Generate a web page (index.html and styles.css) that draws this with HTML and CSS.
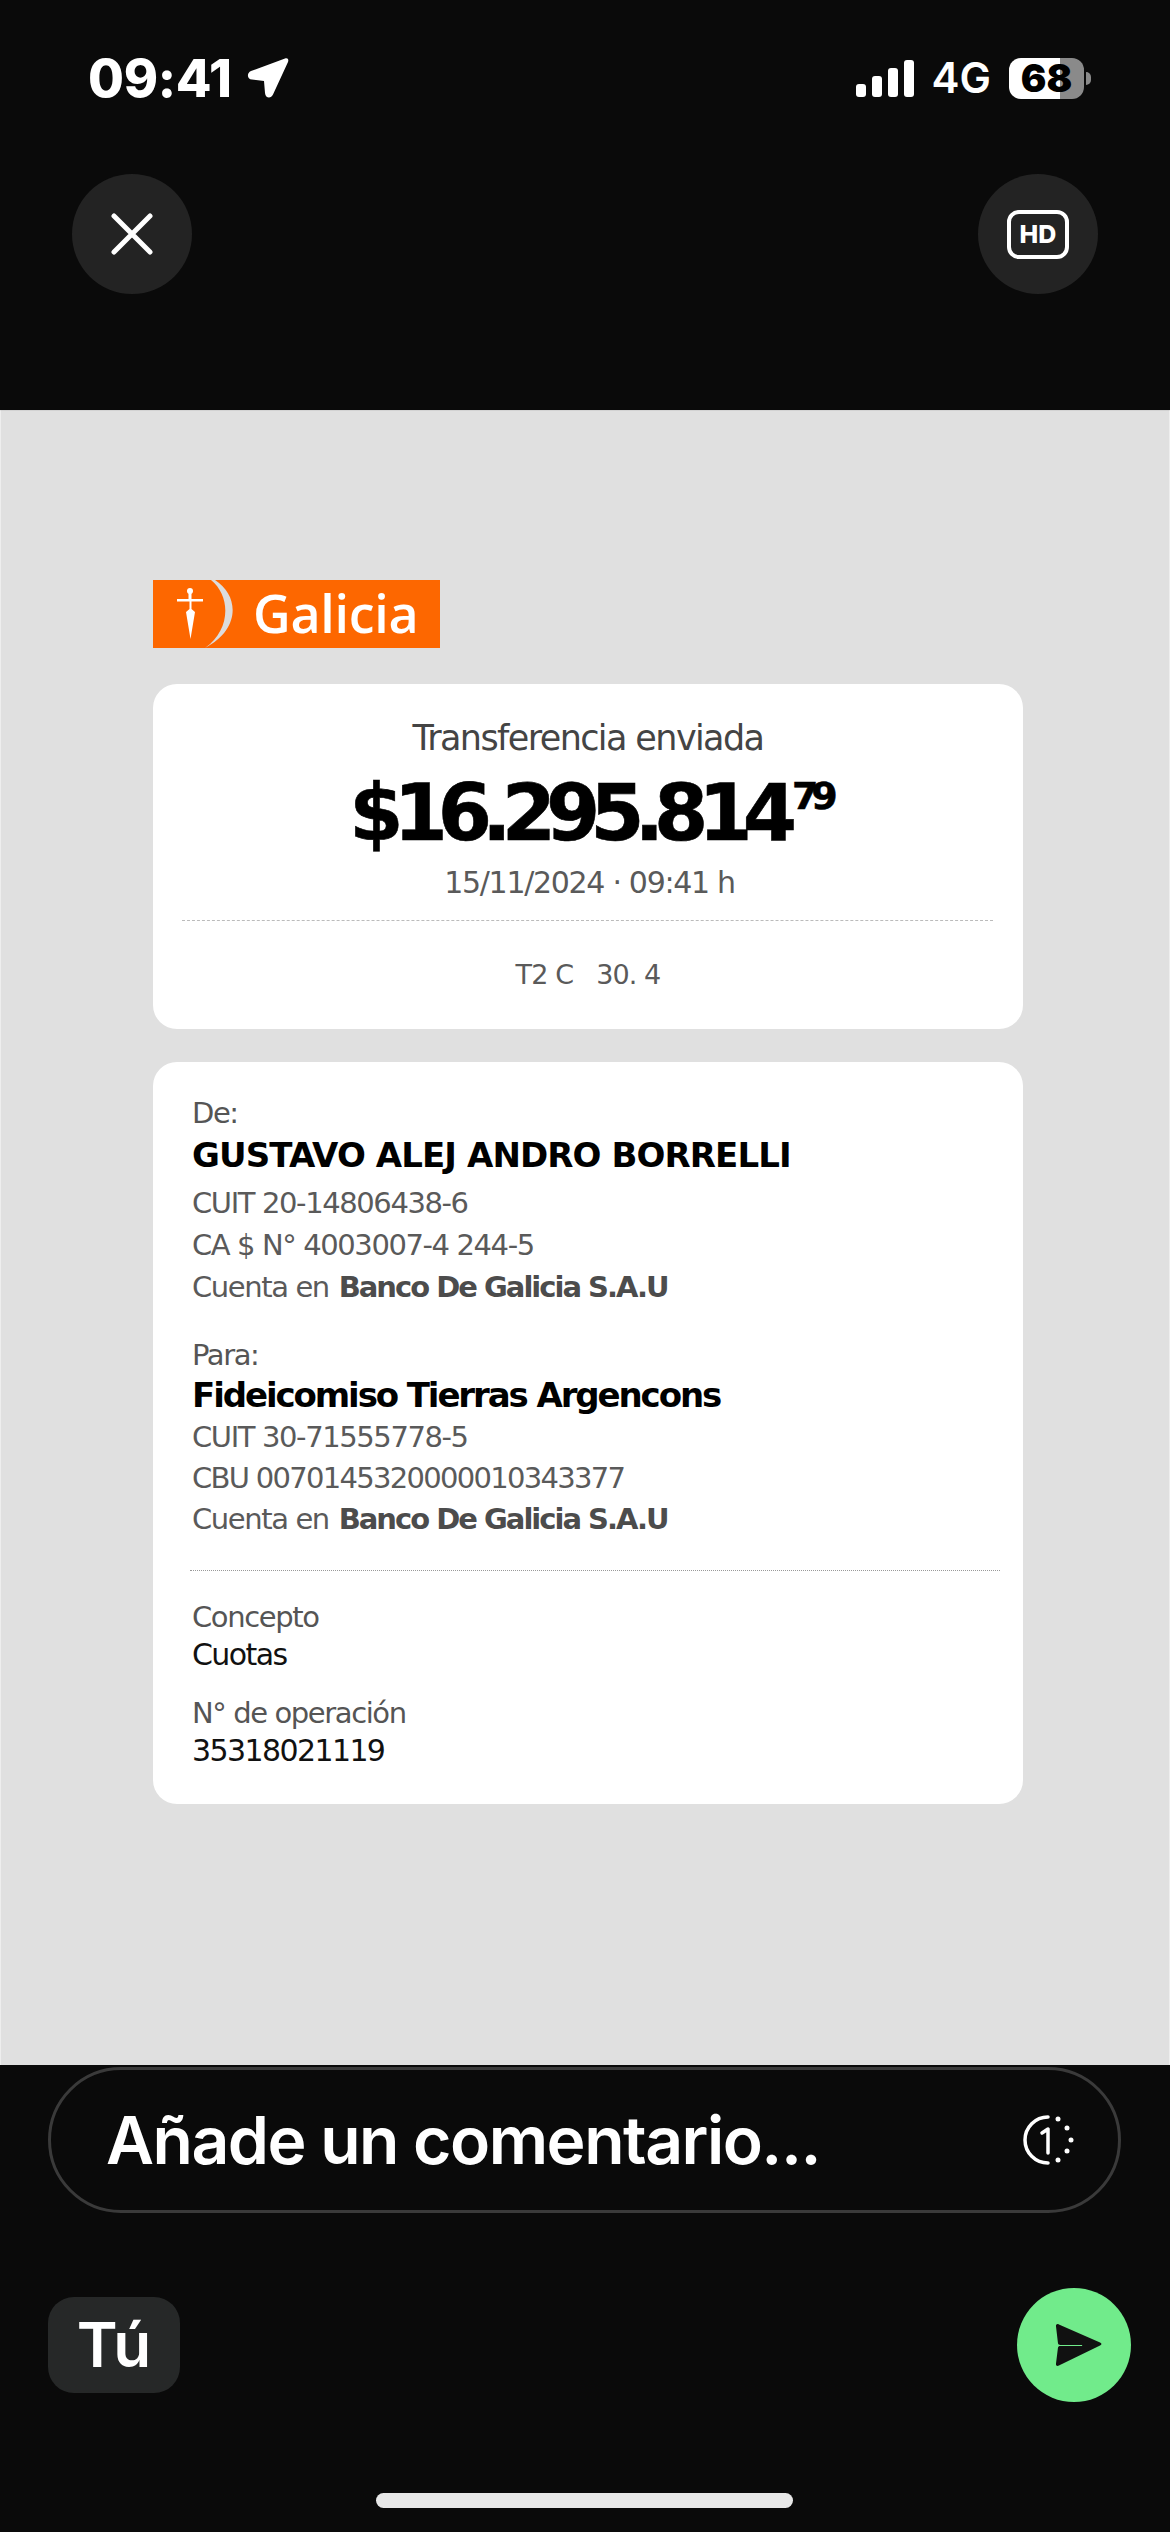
FILE: index.html
```html
<!DOCTYPE html>
<html lang="es">

<head>
    <meta charset="UTF-8">
    <meta name="viewport" content="width=device-width, initial-scale=1.0">
    <title>Comprobante</title>
    <link rel="stylesheet" href="styles.css">
</head>

<body>
    <div class="phone">
        <header class="top">
            <div class="status">
                <div class="status-left">
                    <span class="time">09:41</span>
                    <svg class="arrow" viewBox="0 0 42 42"><path d="M38 1.500 4 14C-.5 16 0 22 5 22.500L17 24l1 12c.5 5.500 6 6 8 1.500L41 5c1-3-.5-4.300-3-3.500z" fill="#fff"/></svg>
                </div>
                <div class="status-right">
                    <svg class="signal" viewBox="0 0 58 37" fill="#fff">
                        <rect x="0" y="24" width="10" height="13" rx="3"/>
                        <rect x="16" y="16" width="10" height="21" rx="3"/>
                        <rect x="32" y="8" width="10" height="29" rx="3"/>
                        <rect x="48" y="0" width="10" height="37" rx="3"/>
                    </svg>
                    <span class="network">4G</span>
                    <div class="battery">68</div>
                    <div class="battery-nub"></div>
                </div>
            </div>
            <div class="actions">
                <div class="round-btn">
                    <svg class="close-icon" viewBox="0 0 42 42"><path d="M3 3l36 36M39 3 3 39" stroke="#fff" stroke-width="5" stroke-linecap="round"/></svg>
                </div>
                <div class="round-btn">
                    <div class="hd">HD</div>
                </div>
            </div>
        </header>

        <main class="receipt">
            <div class="logo">
                <svg class="logo-mark" viewBox="0 0 86 68">
                    <path d="M62 0C87 16 87 50 52 68 78 50 78 16 58 0z" fill="#dcdcdc"/>
                    <path d="M35.500 13h3v6H50v2.500H38.500V29l3.500 3-4.500 27-4.500-27 3.500-3v-7.500H24V19h11.500z" fill="#fff"/>
                    <circle cx="37" cy="11" r="3" fill="#fff"/>
                </svg>
                <span class="logo-text">Galicia</span>
            </div>

            <section class="card summary">
                <div class="sum-title">Transferencia enviada</div>
                <div class="amount">$16.295.814<sup class="cents">79</sup></div>
                <div class="sum-date">15/11/2024 · 09:41 h</div>
                <div class="dash"></div>
                <div class="sum-code">T2 C   30. 4</div>
            </section>

            <section class="card details">
                <div class="party">
                    <div class="label">De:</div>
                    <div class="name name-from">GUSTAVO ALEJ ANDRO BORRELLI</div>
                    <div class="line">CUIT 20-14806438-6</div>
                    <div class="line">CA $ N° 4003007-4 244-5</div>
                    <div class="line">Cuenta en <b>Banco De Galicia S.A.U</b></div>
                </div>
                <div class="party party-to">
                    <div class="label">Para:</div>
                    <div class="name">Fideicomiso Tierras Argencons</div>
                    <div class="line">CUIT 30-71555778-5</div>
                    <div class="line line-cbu">CBU 0070145320000010343377</div>
                    <div class="line">Cuenta en <b>Banco De Galicia S.A.U</b></div>
                </div>
                <div class="dash dash-wide"></div>
                <div class="label label-first">Concepto</div>
                <div class="value">Cuotas</div>
                <div class="label label-next">N° de operación</div>
                <div class="value">35318021119</div>
            </section>
        </main>

        <footer class="bottom">
            <div class="comment">
                <span class="comment-text">Añade un comentario...</span>
                <svg class="once" viewBox="0 0 52 52" fill="#fff">
                    <path d="M26 3a23 23 0 0 0 0 46" fill="none" stroke="#fff" stroke-width="3.500" stroke-linecap="round"/>
                    <path d="M20 19l6-4v24" fill="none" stroke="#fff" stroke-width="3.500" stroke-linecap="round" stroke-linejoin="round"/>
                    <circle cx="36" cy="5" r="2.500"/>
                    <circle cx="45" cy="14" r="2.500"/>
                    <circle cx="49" cy="26" r="2.500"/>
                    <circle cx="45" cy="37" r="2.500"/>
                    <circle cx="36" cy="46" r="2.500"/>
                </svg>
            </div>
            <div class="send-row">
                <div class="chip">Tú</div>
                <div class="send">
                    <svg class="send-icon" viewBox="0 0 50 46"><path d="M4 1.500 47 20.500c2 1 2 2 0 3L4 44.500c-2 1-3.500 0-3-2.500L3 26c.2-1.500 1-2 2.500-2H28c.6 0 .6-1 0-1H5.500C4 23 3.200 22.500 3 21L1 4c-.4-2.500 1-3.500 3-2.500z" fill="#111"/></svg>
                </div>
            </div>
            <div class="home-bar"></div>
        </footer>
    </div>
</body>

</html>
```

FILE: styles.css
```css
* {
    box-sizing: border-box;
}

body {
    margin: 0;
    background-color: #0a0a0a;
    font-family: Inter, "Liberation Sans", sans-serif;
}

.phone {
    width: 1170px;
    height: 2532px;
    display: flex;
    flex-direction: column;
    background-color: #0a0a0a;
    overflow: hidden;
}

/* top area */
.top {
    height: 410px;
    padding-top: 57px;
}

.status {
    height: 42px;
    display: flex;
    justify-content: space-between;
    align-items: center;
    padding: 0 79px 0 88px;
    color: #fff;
}

.status-left,
.status-right {
    display: flex;
    align-items: center;
}

.time {
    font-size: 52px;
    font-weight: 800;
    line-height: 44px;
    padding-top: 2px;
    letter-spacing: -0.3px;
}

.arrow {
    width: 42px;
    height: 42px;
    margin-left: 15px;
}

.signal {
    width: 58px;
    height: 37px;
}

.network {
    font-size: 42px;
    font-weight: 600;
    line-height: 42px;
    margin-left: 18px;
}

.battery {
    width: 75px;
    height: 41px;
    margin-left: 18px;
    border-radius: 12px;
    background: linear-gradient(90deg, #fff 0, #fff 51px, #8a8a8a 51px);
    color: #000;
    font-size: 38px;
    font-weight: 900;
    line-height: 41px;
    text-align: center;
}

.battery-nub {
    width: 5px;
    height: 13px;
    margin-left: 2px;
    border-radius: 0 6px 6px 0;
    background-color: #8a8a8a;
}

.actions {
    display: flex;
    justify-content: space-between;
    padding: 75px 72px 0;
}

.round-btn {
    width: 120px;
    height: 120px;
    border-radius: 50%;
    background-color: #232323;
    display: flex;
    align-items: center;
    justify-content: center;
}

.close-icon {
    width: 42px;
    height: 42px;
}

.hd {
    width: 62px;
    height: 49px;
    border: 4px solid #fff;
    border-radius: 12px;
    color: #fff;
    font-size: 25px;
    font-weight: 800;
    line-height: 41px;
    text-align: center;
}

/* receipt picture */
.receipt {
    height: 1655px;
    padding: 169px 148px 0 152px;
    background-color: #e0e0e0;
    border-left: 1px solid #eee;
    border-right: 1px solid #eee;
    border-top: 1px solid #d2d2d2;
    font-family: "DejaVu Sans", sans-serif;
}

.logo {
    width: 287px;
    height: 68px;
    display: flex;
    align-items: center;
    background-color: #fd6700;
    color: #fff;
}

.logo-mark {
    width: 86px;
    height: 68px;
    flex: none;
}

.logo-text {
    margin: -3px 0 0 14px;
    font-family: "Open Sans", sans-serif;
    font-size: 52px;
    font-weight: 600;
    letter-spacing: -0.3px;
}

.card {
    width: 870px;
    background-color: #fff;
    border-radius: 24px;
}

.summary {
    height: 345px;
    margin-top: 36px;
    padding-top: 31px;
    text-align: center;
}

.sum-title {
    font-size: 35px;
    line-height: 46px;
    letter-spacing: -1.6px;
    color: #444;
}

.amount {
    font-size: 78px;
    font-weight: 700;
    line-height: 90px;
    letter-spacing: -10px;
    color: #000;
    margin-top: 7px;
    padding-left: 4px;
    -webkit-text-stroke: 0.6px #000;
}

.cents {
    font-size: 38px;
    line-height: 0;
    letter-spacing: -7px;
    vertical-align: 31px;
    margin-left: 5px;
}

.sum-date {
    font-size: 30px;
    line-height: 44px;
    letter-spacing: -1.3px;
    color: #5a5a5a;
    margin-top: 3px;
    padding-left: 3px;
}

.dash {
    height: 1px;
    margin: 15px 30px 0 29px;
    border-top: 1px dashed #bbb;
}

.sum-code {
    margin-top: 34px;
    font-size: 27px;
    line-height: 40px;
    letter-spacing: -0.9px;
    color: #5a5a5a;
    white-space: pre;
}

.details {
    height: 742px;
    margin-top: 33px;
    padding: 33px 0 0 39px;
}

.label {
    font-size: 29px;
    line-height: 36px;
    letter-spacing: -1.4px;
    color: #555;
}

.name {
    font-size: 34px;
    font-weight: 700;
    line-height: 48px;
    letter-spacing: -2.1px;
    color: #000;
}

.name-from {
    letter-spacing: -0.9px;
}

.line {
    font-size: 29px;
    line-height: 42px;
    letter-spacing: -1.4px;
    color: #5a5a5a;
}

.line-cbu {
    letter-spacing: -1.7px;
}

.line:nth-child(3) {
    margin-top: 3px;
}

.line b {
    color: #4c4c4c;
    letter-spacing: -2px;
    margin-left: 2px;
}

.party-to {
    margin-top: 29px;
}

.party-to .name {
    line-height: 44px;
}

.party-to .line {
    line-height: 41px;
    margin-top: 0;
}

.dash-wide {
    margin: 30px 0 0 -2px;
    width: 810px;
    border-top: 1px dotted #999;
}

.label-first {
    margin-top: 28px;
}

.label-next {
    margin-top: 20px;
}

.value {
    font-size: 30px;
    line-height: 40px;
    letter-spacing: -1.6px;
    color: #111;
}

/* bottom area */
.bottom {
    flex: 1;
    padding: 2px 49px 0 48px;
}

.comment {
    height: 146px;
    border: 3px solid #3a3a3a;
    border-radius: 73px;
    display: flex;
    align-items: center;
    justify-content: space-between;
    padding: 0 44px 0 55px;
    color: #fff;
}

.comment-text {
    font-size: 66px;
    font-weight: 600;
    letter-spacing: -1.5px;
}

.once {
    width: 52px;
    height: 52px;
}

.send-row {
    display: flex;
    align-items: center;
    justify-content: space-between;
    margin-top: 75px;
    margin-right: -10px;
}

.chip {
    width: 132px;
    height: 96px;
    border-radius: 26px;
    background-color: #262828;
    color: #fff;
    font-size: 62px;
    font-weight: 600;
    line-height: 96px;
    text-align: center;
}

.send {
    width: 114px;
    height: 114px;
    border-radius: 50%;
    background-color: #71eb8b;
    display: flex;
    align-items: center;
    justify-content: center;
}

.send-icon {
    width: 48px;
    height: 44px;
    margin-left: 10px;
}

.home-bar {
    width: 417px;
    height: 15px;
    margin: 91px 0 0 328px;
    border-radius: 8px;
    background-color: #e8e8e8;
}
```
